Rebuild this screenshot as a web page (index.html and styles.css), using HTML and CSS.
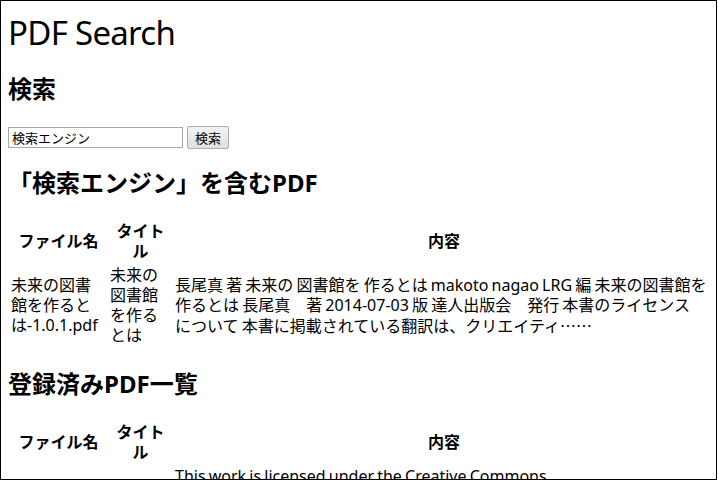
FILE: index.html
```html
<!DOCTYPE html>
<html lang="ja">
<head>
<meta charset="utf-8">
<title>PDF Search</title>
<link rel="stylesheet" href="styles.css">
</head>
<body>
<div class="frame">
  <h1 class="title">PDF Search</h1>
  <h2 class="section">検索</h2>
  <form class="search">
    <input class="query" type="text" value="検索エンジン">
    <button class="btn" type="button">検索</button>
  </form>
  <h2 class="section result-title">「検索エンジン」を含むPDF</h2>
  <table class="list">
    <thead>
      <tr><th class="c-file">ファイル名</th><th class="c-title">タイトル</th><th>内容</th></tr>
    </thead>
    <tbody>
      <tr>
        <td>未来の図書館を作るとは-1.0.1.pdf</td>
        <td>未来の図書館を作るとは</td>
        <td class="content">長尾真 著 未来の 図書館を 作るとは makoto nagao LRG 編 未来の図書館を<br>作るとは 長尾真　著 2014-07-03 版 達人出版会　発行 本書のライセンス<br>について 本書に掲載されている翻訳は、クリエイティ<span class="cjk">……</span></td>
      </tr>
    </tbody>
  </table>
  <h2 class="section">登録済みPDF一覧</h2>
  <table class="list">
    <thead>
      <tr><th class="c-file">ファイル名</th><th class="c-title">タイトル</th><th>内容</th></tr>
    </thead>
    <tbody>
      <tr>
        <td></td>
        <td></td>
        <td class="content">This work is licensed under the Creative Commons</td>
      </tr>
    </tbody>
  </table>
</div>
</body>
</html>
```

FILE: styles.css
```css
html, body {
  margin: 0;
  padding: 0;
  background: #fff;
}
body {
  font-family: "Noto Sans", "Noto Sans CJK JP", sans-serif;
  color: #000;
}
.frame {
  box-sizing: border-box;
  width: 717px;
  height: 480px;
  border: 1px solid #000;
  padding: 0 0 0 7px;
  overflow: hidden;
}
.title {
  font-size: 33px;
  letter-spacing: -0.7px;
  font-weight: normal;
  line-height: 40px;
  margin: 12px 0 0 0;
}
.section {
  font-size: 24px;
  font-weight: bold;
  line-height: 32px;
  margin: 20px 0 0 0;
}
.result-title {
  margin-top: 18px;
}
.search {
  display: flex;
  align-items: center;
  gap: 4px;
  margin: 21px 0 0 0;
}
.query {
  box-sizing: border-box;
  width: 175px;
  height: 21px;
  border: 1px solid #a9a9a9;
  padding: 0 3px;
  font-family: "Noto Sans CJK JP", sans-serif;
  font-size: 13px;
  margin: 0;
}
.btn {
  box-sizing: border-box;
  width: 42px;
  height: 23px;
  border: 1px solid #adadad;
  border-radius: 2px;
  background: linear-gradient(#f2f2f2, #e0e0e0);
  font-family: "Noto Sans CJK JP", sans-serif;
  font-size: 13px;
  padding: 0;
  margin: 0;
}
.list {
  width: 100%;
  border-spacing: 2px;
  margin: 19px 0 0 0;
  font-size: 16px;
  line-height: 20px;
}
.list th, .list td {
  padding: 1px;
  vertical-align: middle;
}
.list th {
  font-weight: bold;
  text-align: center;
}
.list td {
  text-align: left;
}
.list .content {
  word-spacing: -1px;
}
.cjk {
  font-family: "Noto Sans CJK JP", sans-serif;
}
.c-file {
  width: 95px;
}
.c-title {
  width: 61px;
}
```
